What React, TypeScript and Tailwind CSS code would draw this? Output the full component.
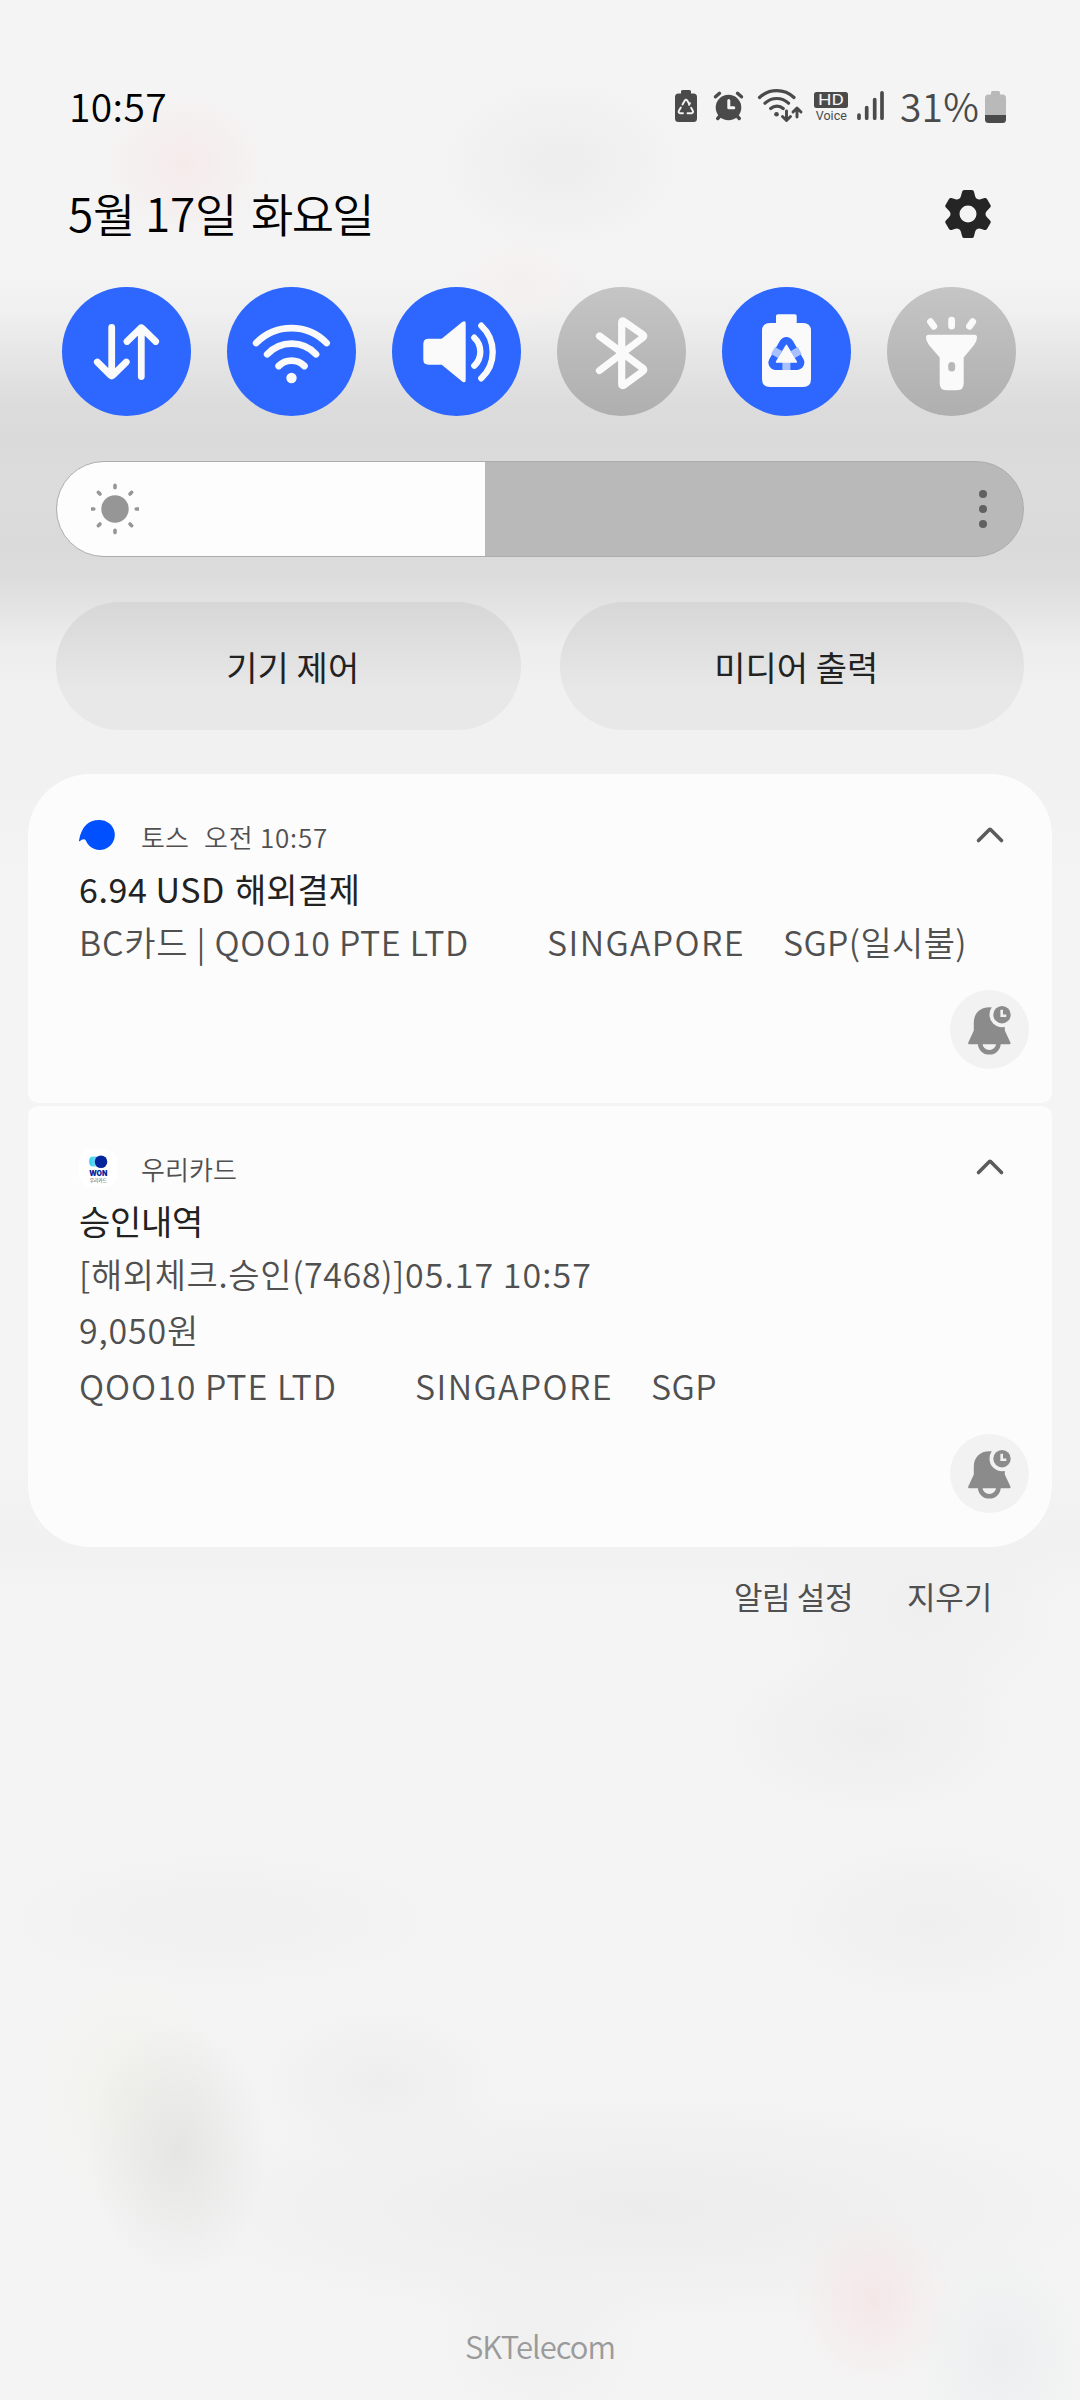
import { useLayoutEffect, useRef, type ReactNode } from "react";

/** Single line of text whose tracking is adjusted so it fills a given width. */
function Line({ w, className = "", children }: { w: number; className?: string; children: string }) {
  const ref = useRef<HTMLSpanElement>(null);
  useLayoutEffect(() => {
    const fit = () => {
      const el = ref.current;
      if (!el) return;
      el.style.letterSpacing = "0px";
      const natural = el.getBoundingClientRect().width;
      el.style.letterSpacing = `${(w - natural) / children.length}px`;
    };
    fit();
    document.fonts?.ready.then(fit);
  }, [w, children]);
  return (
    <span ref={ref} className={`inline-block shrink-0 whitespace-pre ${className}`}>
      {children}
    </span>
  );
}

function StatusIcons() {
  return (
    <svg width="210" height="36" viewBox="675 89 210 36" fill="none" className="mt-[2px] text-[#4a4a4a]">
      {/* power saving battery */}
      <path fill="currentColor" d="M681 94.500V92.500q0-1.500 1.500-1.500h7q1.500 0 1.500 1.500V94.500h2.500q3.500 0 3.500 3.500V119.500q0 3.500-3.500 3.500h-15q-3.500 0-3.500-3.500V98q0-3.500 3.500-3.500z" />
      <g stroke="#f4f4f4" strokeWidth="1.900" strokeLinecap="round" strokeLinejoin="round">
        <path d="M682.500 105.500l2.300-4q1.200-1.500 2.400 0l2.300 4M689 105.800l.9-1.600M680.800 108.500l-1.900 3.300q-.9 2 1.100 2.400h3M687.500 114.200h4.200q2-.4 1.100-2.400l-1.700-3" />
      </g>
      {/* alarm */}
      <circle cx="728.500" cy="108.500" r="12.800" fill="currentColor" />
      <path stroke="currentColor" strokeWidth="3.400" strokeLinecap="round" d="M715.500 97.800l4-3.500M741.500 97.800l-4-3.500M720 117l-2.300 2.500M737 117l2.300 2.500" />
      <path stroke="#f4f4f4" strokeWidth="3" strokeLinecap="round" strokeLinejoin="round" d="M728.800 101.500v7.200h5" />
      {/* wifi with traffic arrows */}
      <g stroke="currentColor" strokeWidth="3.200" strokeLinecap="round" strokeLinejoin="round">
        <path d="M759.500 98.500a25 25 0 0 1 34.500 0M765 104.200a17 17 0 0 1 23.500 0M770.700 109.500a9.500 9.500 0 0 1 12.500 0" />
        <path strokeWidth="2.900" d="M786.500 112v9M782.500 117.500l4 4 4-4M797 118v-8M793 113l4-4 4 4" />
      </g>
      <circle cx="776.500" cy="115.300" r="2.300" fill="currentColor" />
      {/* HD voice */}
      <rect x="814" y="93" width="34" height="16" rx="2.500" fill="currentColor" />
      <text x="831" y="106" textAnchor="middle" textLength="26" lengthAdjust="spacingAndGlyphs" fill="#f4f4f4" className="font-['Roboto'] text-[14.500px]">HD</text>
      <text x="831.300" y="120.600" textAnchor="middle" textLength="31" lengthAdjust="spacingAndGlyphs" fill="currentColor" className="font-['Roboto'] text-[12px]">Voice</text>
      {/* signal */}
      <path stroke="currentColor" strokeWidth="3.700" strokeLinecap="round" d="M859 116.200v3M866.700 108.500v10.700M874.700 100.500v18.700M882 93.800v25.400" />
    </svg>
  );
}

function Tile({ on, children }: { on: boolean; children: ReactNode }) {
  return (
    <button className={`size-[129px] shrink-0 rounded-full ${on ? "bg-[#2d67ff]" : "bg-linear-to-b from-[#c5c5c5] to-[#afafaf]"}`}>
      <svg width="129" height="129" viewBox="0 0 129 129" fill="none" stroke="#fafafa" strokeWidth="6.800" strokeLinecap="round" strokeLinejoin="round">
        {children}
      </svg>
    </button>
  );
}

function BellButton() {
  return (
    <button className="block size-[79px] rounded-full bg-[#f2f2f2]">
      <svg width="79" height="79" viewBox="0 0 79 79" fill="none">
        <path fill="#8b8b8b" d="M23.800 40.500V32.500C23.800 23.500 30 17.300 39.300 17.300S54.800 23.500 54.800 32.500V40.500L60.500 52.700Q60.900 54.300 59.300 54.300H19.300Q17.700 54.300 18.200 52.700Z" />
        <path stroke="#8b8b8b" strokeWidth="4.600" d="M30.200 53.500a9.100 8.800 0 0 0 18.200 0" />
        <circle cx="52" cy="24.700" r="12.500" fill="#f2f2f2" />
        <circle cx="52" cy="24.700" r="8.700" fill="#8b8b8b" />
        <path stroke="#f2f2f2" strokeWidth="2.600" d="M51.700 19.700v6h4.600" />
      </svg>
    </button>
  );
}

function Chevron() {
  return (
    <svg width="30" height="18" viewBox="0 0 30 18" fill="none" stroke="#5c5c5c" strokeWidth="3.600" strokeLinecap="round" strokeLinejoin="round" className="mb-[2px]">
      <path d="M3.500 14.500L14.500 3.500q.5-.4 1 0L26.500 14.500" />
    </svg>
  );
}

function TossIcon() {
  return (
    <svg width="38" height="38" viewBox="0 0 38 38" className="mb-[2px]">
      <path fill="#0050ff" d="M0 24.500C2.500 10.500 9.500 4 20 4A15 15 0 1 1 7.300 25.500Q6.500 23 4.700 23.300 2.500 23.600 1 25Q-.2 25.800 0 24.500Z" />
    </svg>
  );
}

function WooriIcon() {
  return (
    <svg width="38" height="38" viewBox="0 0 38 38" className="mb-[1px]">
      <defs>
        <linearGradient id="won-sky">
          <stop offset="0" stopColor="#35cdf0" />
          <stop offset="1" stopColor="#a5e9f8" />
        </linearGradient>
      </defs>
      <rect width="38" height="38" rx="13" fill="#fff" />
      <rect x="10.300" y="7.500" width="12" height="10" rx="4" fill="url(#won-sky)" />
      <circle cx="22" cy="12.800" r="6.300" fill="#04249c" />
      <text x="19.300" y="26.500" textAnchor="middle" textLength="18" lengthAdjust="spacingAndGlyphs" fill="#04249c" className="font-['Inter'] text-[7.500px] font-black">WON</text>
      <text x="19.300" y="32.600" textAnchor="middle" textLength="17" lengthAdjust="spacingAndGlyphs" fill="#333" className="font-['Noto_Sans_CJK_KR'] text-[5px]">우리카드</text>
    </svg>
  );
}

function Card({ className, icon, header, title, children }: { className: string; icon: ReactNode; header: ReactNode; title: ReactNode; children: ReactNode }) {
  return (
    <article className={`relative bg-[#fcfcfc] pl-[51px] pt-[35px] text-[34px] text-[#505050] ${className}`}>
      <header className="flex h-[54px] items-center pr-[47px] text-[26px] font-[350]">
        {icon}
        <div className="ml-6 flex flex-1 items-center gap-[15px]">{header}</div>
        <Chevron />
      </header>
      <h2 className="flex h-[50px] items-center font-normal text-[#222]">{title}</h2>
      {children}
      <div className="absolute bottom-[34px] right-[23px]">
        <BellButton />
      </div>
    </article>
  );
}

const sunRays = [0, 45, 90, 135, 180, 225, 270, 315];

export default function App() {
  return (
    <main className="relative flex h-[2400px] w-[1080px] flex-col overflow-hidden bg-[#f4f4f4] bg-[radial-gradient(90px_80px_at_184px_165px,#f6ebeb,#f6ebeb00),radial-gradient(130px_90px_at_560px_163px,#ededed,#ededed00),radial-gradient(70px_50px_at_520px_280px,#f5f0ef,#f6efed00),radial-gradient(160px_90px_at_870px_1733px,#eeeeee,#eeeeee00),radial-gradient(260px_80px_at_220px_1920px,#f0f0f0,#f0f0f000),radial-gradient(170px_90px_at_930px_1922px,#efefef,#efefef00),radial-gradient(90px_130px_at_178px_2150px,#e5e5e4,#e8e8e800),radial-gradient(90px_120px_at_130px_2095px,#f1f1eb,#f2f2ec00),radial-gradient(130px_80px_at_380px_2083px,#eeeeee,#eeeeee00),radial-gradient(80px_90px_at_873px_2300px,#f5e7e8,#f4eaea00),radial-gradient(500px_120px_at_640px_2208px,#ececec,#eeeeee00),radial-gradient(90px_110px_at_1000px_2355px,#eceeef,#eceff000),radial-gradient(120px_100px_at_540px_2340px,#f0f0f0,#f0f0f000),radial-gradient(160px_120px_at_920px_1610px,#efefef,#f1f1f100),linear-gradient(to_bottom,#f4f4f4_270px,#f0f0f0_310px,#e5e5e5_360px,#dcdcdc_405px,#dadada_440px,#dcdcdc_480px,#dadada_545px,#dcdcdc_575px,#e3e3e3_605px,#ededed_645px,#f1f1f1_690px,#f1f1f1_780px,#f4f4f4_900px,#f4f4f4_1450px,#f1f1f1_1540px,#f4f4f4_1600px)] font-['Noto_Sans_CJK_KR',sans-serif]">
      <div className="mt-[80px] flex h-[50px] items-center justify-between pl-[69px] pr-[74px]">
        <Line w={98} className="text-[39px] font-[350] text-black">10:57</Line>
        <div className="flex items-center">
          <StatusIcons />
          <Line w={79} className="ml-[15px] text-[39px] font-[350] text-[#4a4a4a]">31%</Line>
          <svg width="21" height="32" viewBox="0 0 21 32" className="ml-[6px] mt-[4px]">
            <path fill="#b9b9b9" d="M6 3.500V1.500Q6 0 7.500 0h6Q15 0 15 1.500V3.500h2.500Q21 3.500 21 7V24H0V7q0-3.500 3.500-3.500z" />
            <path fill="#4a4a4a" d="M0 24h21v4.500q0 3.500-3.500 3.500h-14Q0 32 0 28.500z" />
          </svg>
        </div>
      </div>

      <div className="mt-[52px] flex h-[60px] items-center justify-between pl-[68px] pr-[89px]">
        <div className="flex gap-[14px] text-[46px] font-[350] text-black">
          <Line w={169}>5월 17일</Line>
          <Line w={122}>화요일</Line>
        </div>
        <svg width="46" height="48" viewBox="0 0 46 48" className="mt-[4px]">
          <path fill="#252525" fillRule="evenodd" d="M19.200 0H27Q28.500 0 28.900 1.500L30.200 6.500Q30.700 8.200 32.200 9 33.800 9.800 35.500 9.200L39.500 8.100Q41.100 7.700 42 9.100L45.500 15Q46.200 16.500 45.100 17.600L42 20.700Q40.500 22.300 40.500 24T42 27.300L45.100 30.400Q46.200 31.500 45.500 33L42 38.900Q41.100 40.300 39.500 39.900L35.500 38.800Q33.800 38.200 32.200 39 30.700 39.800 30.200 41.500L28.900 46.500Q28.500 48 27 48H19.200Q17.600 48 17.200 46.500L15.800 41.500Q15.300 39.800 13.800 39 12.200 38.200 10.500 38.800L6.500 39.900Q4.900 40.300 4 38.900L.5 33Q-.2 31.500.9 30.400L4 27.300Q5.500 25.700 5.500 24T4 20.700L.9 17.600Q-.2 16.500.5 15L4 9.100Q4.900 7.700 6.500 8.100L10.500 9.200Q12.200 9.800 13.800 9 15.300 8.200 15.800 6.500L17.200 1.500Q17.600 0 19.200 0ZM23 15.500a8.500 8.500 0 1 0 0 17a8.500 8.500 0 1 0 0-17Z" />
        </svg>
      </div>

      <div className="mt-[45px] flex gap-9 pl-[62px]">
        <Tile on>
          <path d="M49.700 40.500V88.500M35.300 75L48.800 88.500q.9.800 1.800 0L64.300 75M79.300 89.500V41.500M65 54.500L78.400 41.300q.9-.8 1.800 0L93.700 54.500" />
        </Tile>
        <Tile on>
          <path d="M29.200 56a49 49 0 0 1 70.400 0M40.200 67.200a33.400 33.400 0 0 1 48.800 0M51.700 79a18 18 0 0 1 25.700 0" />
          <circle cx="64.500" cy="91" r="5.200" fill="#fafafa" stroke="none" />
        </Tile>
        <Tile on>
          <path fill="#fafafa" stroke="none" d="M36.500 51.700H49.700L70.500 34.800Q73.700 33 73.700 36.500V93Q73.700 96.500 70.500 94.700L49.700 77.700H36.500Q31.300 77.700 31.300 72.500V57Q31.300 51.700 36.500 51.700Z" />
          <path strokeWidth="6.300" d="M82.300 50.700a19.300 19.300 0 0 1 0 28M89.300 38.700a36 36 0 0 1 0 52.600" />
        </Tile>
        <Tile on={false}>
          <path strokeWidth="7.200" d="M42.500 49L86 81.300q1.600 1.400 0 2.800L67 98.200q-2.300 1-2.300-1V35.500q0-2.500 2.300-1L86 47.700q1.600 1.400 0 2.800L42.500 83.500" />
        </Tile>
        <Tile on>
          <path fill="#fafafa" stroke="none" d="M56 27.300H73Q74.700 27.300 74.700 29V36H81Q89 36 89 44V92Q89 100 81 100H48Q40 100 40 92V44Q40 36 48 36H54V29Q54 27.300 56 27.300Z" />
          <path fill="#2d67ff" stroke="#2d67ff" strokeWidth="14.600" d="M64.400 57.300L53.700 75.600H75.100Z" />
          <path stroke="#a8c0ff" strokeLinecap="butt" strokeWidth="8" d="M64.400 75v7.900M58 67.500L51 63.500M70.800 67.500L77.800 63.500" />
          <path fill="#fafafa" stroke="#fafafa" strokeWidth="1.500" d="M64.400 58.300L54.500 75H74.300Z" />
        </Tile>
        <Tile on={false}>
          <path d="M43.500 34.700L46.800 39.300M64.600 33.200V39M85.700 34.700L82.500 39.300" />
          <path fill="#fafafa" stroke="none" d="M41.500 47.700H87.500Q90 47.700 90 50.200 90 54.500 87 58L76.700 70.500V96.500Q76.700 103.300 70 103.300H59.400Q52.700 103.300 52.700 96.500V70.500L42 58Q39 54.500 39 50.200 39 47.700 41.500 47.700Z" />
          <rect x="61.200" y="75" width="7" height="9.400" rx="3.500" fill="#b8b8b8" stroke="none" />
        </Tile>
      </div>

      <div className="mx-[56px] mt-[45px] flex h-[96px] items-center justify-between overflow-hidden rounded-full border border-[#adadad] bg-[linear-gradient(to_right,#fdfdfd_428px,#b9b9b9_428px)] pl-[34px] pr-[36px]">
        <svg width="48" height="52" viewBox="-24 -26 48 52">
          <circle r="13.700" fill="#969696" />
          {sunRays.map((a) => (
            <path key={a} d="M0-21.200V-23.600" transform={`rotate(${a})`} stroke="#969696" strokeWidth="3.600" strokeLinecap="round" />
          ))}
        </svg>
        <div className="flex flex-col gap-[7px]">
          <i className="size-2 rounded-full bg-[#616161]" />
          <i className="size-2 rounded-full bg-[#616161]" />
          <i className="size-2 rounded-full bg-[#616161]" />
        </div>
      </div>

      <div className="mx-[56px] mt-[45px] grid grid-cols-2 gap-[39px] text-[34px] text-[#222]">
        <button className="flex h-[128px] items-center justify-center rounded-full bg-linear-to-b from-[#d7d7d7] to-[#e8e8e8] to-70% pl-[9px]">
          <Line w={133}>기기 제어</Line>
        </button>
        <button className="flex h-[128px] items-center justify-center rounded-full bg-linear-to-b from-[#d7d7d7] to-[#e8e8e8] to-70% pl-[9px]">
          <Line w={164}>미디어 출력</Line>
        </button>
      </div>

      <section className="mx-7 mt-[44px] flex flex-col gap-[3px]">
        <Card
          className="h-[329px] rounded-b-[10px] rounded-t-[62px]"
          icon={<TossIcon />}
          header={
            <>
              <Line w={48}>토스</Line>
              <Line w={124}>오전 10:57</Line>
            </>
          }
          title={
            <>
              <Line w={146}>6.94 USD</Line>
              <Line w={125} className="ml-[10px]">해외결제</Line>
            </>
          }
        >
          <p className="flex h-14 items-center">
            <Line w={390} className="font-[350]">BC카드 | QOO10 PTE LTD</Line>
            <Line w={198} className="ml-[78px] font-[350]">SINGAPORE</Line>
            <Line w={184} className="ml-[38px] font-[350]">SGP(일시불)</Line>
          </p>
        </Card>
        <Card
          className="h-[441px] rounded-b-[62px] rounded-t-[10px]"
          icon={<WooriIcon />}
          header={<Line w={96}>우리카드</Line>}
          title={<Line w={124}>승인내역</Line>}
        >
          <p className="flex h-14 items-center">
            <Line w={326} className="font-[350]">[해외체크.승인(7468)]</Line>
            <Line w={187} className="font-[350]">05.17 10:57</Line>
          </p>
          <p className="flex h-14 items-center">
            <Line w={120} className="font-[350]">9,050원</Line>
          </p>
          <p className="flex h-14 items-center">
            <Line w={258} className="font-[350]">QOO10 PTE LTD</Line>
            <Line w={198} className="ml-[78px] font-[350]">SINGAPORE</Line>
            <Line w={66} className="ml-[38px] font-[350]">SGP</Line>
          </p>
        </Card>
      </section>

      <div className="flex h-[98px] items-center justify-end gap-[54px] pr-[88px] text-[31px] text-[#505050]">
        <Line w={119}>알림 설정</Line>
        <Line w={85}>지우기</Line>
      </div>

      <footer className="mb-[31px] mt-auto flex h-[46px] items-center justify-center text-[31px] font-[350] text-[#9a9a9a]">
        <Line w={150}>SKTelecom</Line>
      </footer>
    </main>
  );
}
